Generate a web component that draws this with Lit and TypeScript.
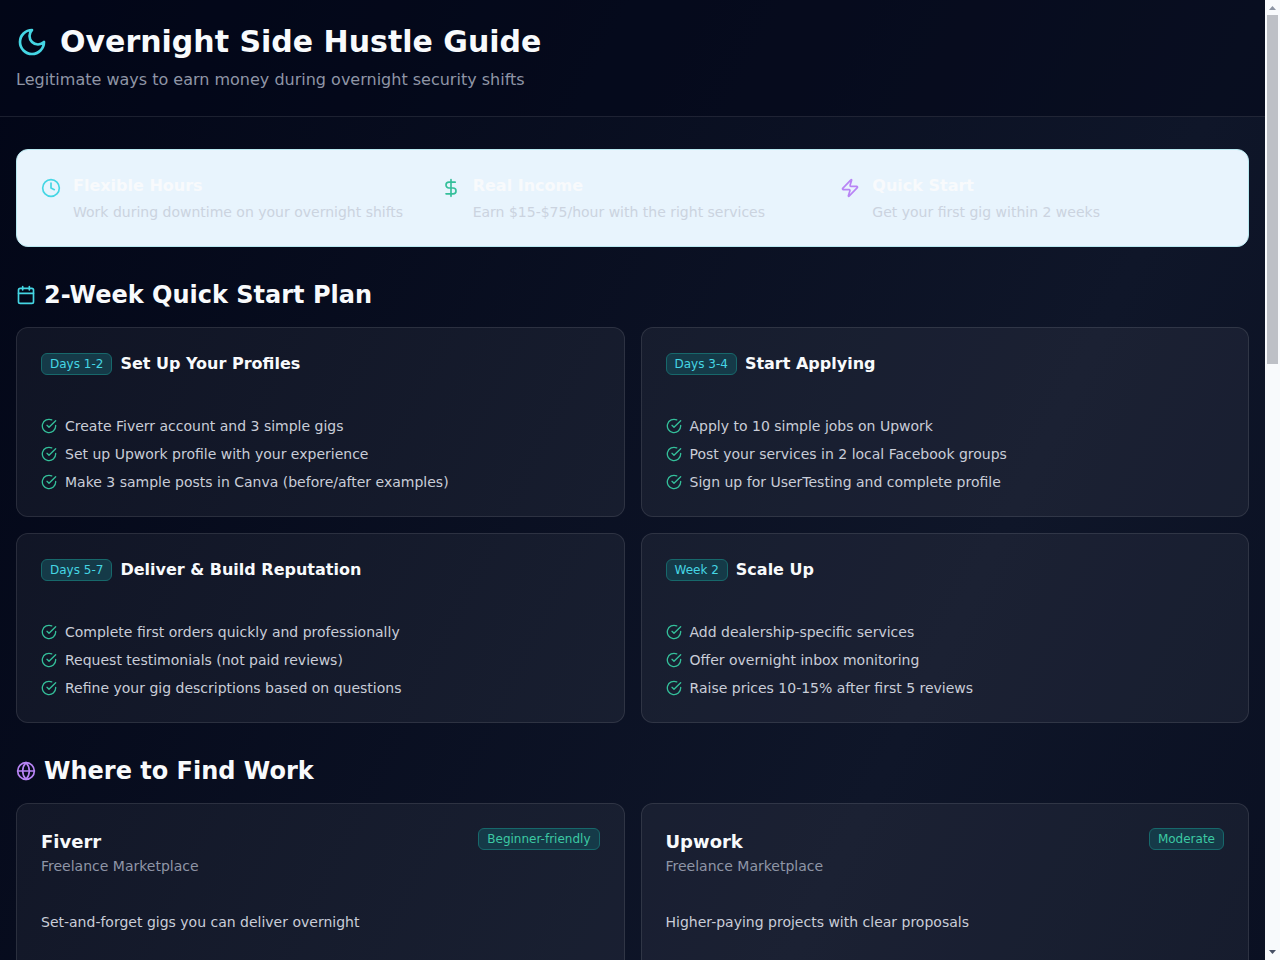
import { LitElement, html, css, svg } from "lit";
import { customElement, property } from "lit/decorators.js";

const icons: Record<string, unknown> = {
  moon: svg`<path d="M12 3a6 6 0 0 0 9 9 9 9 0 1 1-9-9Z"/>`,
  clock: svg`<circle cx="12" cy="12" r="10"/><polyline points="12 6 12 12 16 14"/>`,
  dollar: svg`<line x1="12" x2="12" y1="2" y2="22"/><path d="M17 5H9.5a3.5 3.5 0 0 0 0 7h5a3.5 3.5 0 0 1 0 7H6"/>`,
  zap: svg`<path d="M4 14a1 1 0 0 1-.78-1.63l9.9-10.2a.5.5 0 0 1 .86.46l-1.92 6.02A1 1 0 0 0 13 10h7a1 1 0 0 1 .78 1.63l-9.9 10.2a.5.5 0 0 1-.86-.46l1.92-6.02A1 1 0 0 0 11 14z"/>`,
  calendar: svg`<path d="M8 2v4"/><path d="M16 2v4"/><rect width="18" height="18" x="3" y="4" rx="2"/><path d="M3 10h18"/>`,
  globe: svg`<circle cx="12" cy="12" r="10"/><path d="M12 2a14.5 14.5 0 0 0 0 20 14.5 14.5 0 0 0 0-20"/><path d="M2 12h20"/>`,
  check: svg`<path d="M22 11.08V12a10 10 0 1 1-5.93-9.14"/><path d="m9 11 3 3L22 4"/>`,
};

@customElement("line-icon")
export class LineIcon extends LitElement {
  @property() name = "";

  static styles = css`
    :host { display: block; flex: none; width: 20px; height: 20px; }
    .glyph { display: block; width: 100%; height: 100%; fill: none; stroke: currentColor; stroke-width: 2; stroke-linecap: round; stroke-linejoin: round; }
  `;

  render() {
    return html`<svg class="glyph" viewBox="0 0 24 24" aria-hidden="true">${icons[this.name]}</svg>`;
  }
}

const benefits = [
  { icon: "clock", tone: "cyan", title: "Flexible Hours", text: "Work during downtime on your overnight shifts" },
  { icon: "dollar", tone: "green", title: "Real Income", text: "Earn $15-$75/hour with the right services" },
  { icon: "zap", tone: "purple", title: "Quick Start", text: "Get your first gig within 2 weeks" },
];

const plan = [
  { when: "Days 1-2", title: "Set Up Your Profiles", steps: ["Create Fiverr account and 3 simple gigs", "Set up Upwork profile with your experience", "Make 3 sample posts in Canva (before/after examples)"] },
  { when: "Days 3-4", title: "Start Applying", steps: ["Apply to 10 simple jobs on Upwork", "Post your services in 2 local Facebook groups", "Sign up for UserTesting and complete profile"] },
  { when: "Days 5-7", title: "Deliver & Build Reputation", steps: ["Complete first orders quickly and professionally", "Request testimonials (not paid reviews)", "Refine your gig descriptions based on questions"] },
  { when: "Week 2", title: "Scale Up", steps: ["Add dealership-specific services", "Offer overnight inbox monitoring", "Raise prices 10-15% after first 5 reviews"] },
];

const platforms = [
  { name: "Fiverr", kind: "Freelance Marketplace", level: "Beginner-friendly", text: "Set-and-forget gigs you can deliver overnight" },
  { name: "Upwork", kind: "Freelance Marketplace", level: "Moderate", text: "Higher-paying projects with clear proposals" },
];

@customElement("app-root")
export class AppRoot extends LitElement {
  static styles = css`
    :host {
      display: flex;
      height: 100vh;
      font-family: "DejaVu Sans", sans-serif;
      font-size: 16px;
      line-height: 24px;
      color: #f8fafc;
    }
    h1, h2, h3, p, ul { margin: 0; padding: 0; }
    .page { flex: 1; min-width: 0; overflow-y: auto; scrollbar-width: none; background: #020617; }
    .canvas { background: linear-gradient(to bottom right, #020617, #0f1629, #020617) 0 0 / 100% 2556px no-repeat; }
    .top { padding: 24px 16px; border-bottom: 1px solid rgba(255, 255, 255, 0.1); background: rgba(2, 6, 23, 0.5); }
    .brand { display: flex; align-items: center; gap: 12px; margin-bottom: 8px; }
    .brand-icon { width: 32px; height: 32px; }
    .brand-name { font-size: 30px; line-height: 36px; font-weight: 700; }
    .tagline { color: #8f95a6; }
    .content { display: grid; gap: 32px; padding: 32px 16px; }
    .cyan { color: #45d6e4; }
    .green { color: #34bf9a; }
    .purple { color: #b884f5; }

    .summary { display: grid; grid-template-columns: repeat(3, minmax(0, 1fr)); gap: 16px; padding: 24px; border: 1px solid #b9e8f0; border-radius: 12px; background: #e8f4fd; }
    .benefit { display: flex; gap: 12px; }
    .benefit-icon { margin-top: 4px; }
    .benefit-title { font-size: 16px; line-height: 24px; font-weight: 700; }
    .benefit-text { margin-top: 4px; font-size: 14px; line-height: 20px; color: #cbd3df; }

    .section-title { display: flex; align-items: center; gap: 8px; margin-bottom: 16px; font-size: 24px; line-height: 32px; font-weight: 700; }
    .cards { display: grid; grid-template-columns: repeat(2, minmax(0, 1fr)); gap: 16px; }
    .card { padding: 24px; border: 1px solid rgba(255, 255, 255, 0.1); border-radius: 12px; background: rgba(255, 255, 255, 0.05); }
    .card-head { display: flex; align-items: center; gap: 8px; margin-bottom: 40px; }
    .card-title { font-size: 16px; line-height: 24px; font-weight: 700; }
    .badge { flex: none; padding: 2px 8px; border: 1px solid #17686b; border-radius: 6px; background: #153a48; font-size: 12px; line-height: 16px; color: #45d6e4; }
    .badge.level { color: #3cc9a3; }
    .steps { display: grid; gap: 8px; list-style: none; font-size: 14px; line-height: 20px; color: #c9cdd8; }
    .step { display: flex; align-items: center; gap: 8px; }
    .step-icon { width: 16px; height: 16px; color: #34bf9a; }

    .platform { padding-bottom: 48px; }
    .platform-head { display: flex; align-items: flex-start; justify-content: space-between; gap: 16px; margin-bottom: 36px; }
    .platform-name { font-size: 18px; line-height: 28px; font-weight: 700; }
    .platform-kind { font-size: 14px; line-height: 20px; color: #8f95a6; }
    .platform-text { font-size: 14px; line-height: 20px; color: #c9cdd8; }

    .scrollbar { flex: none; display: flex; flex-direction: column; align-items: center; width: 15px; background: #f8fafc; }
    .arrow { display: block; width: 15px; height: 15px; fill: #8c94a3; }
    .arrow.down { fill: #475065; }
    .track { flex: 1; display: flex; width: 11px; }
    .thumb { flex: 1; height: 37.5%; background: #bdc0c6; }
  `;

  render() {
    return html`
      <div class="page">
        <div class="canvas">
          <header class="top">
            <div class="brand">
              <line-icon class="brand-icon cyan" name="moon"></line-icon>
              <h1 class="brand-name">Overnight Side Hustle Guide</h1>
            </div>
            <p class="tagline">Legitimate ways to earn money during overnight security shifts</p>
          </header>
          <main class="content">
            <section class="summary">
              ${benefits.map((b) => html`
                <div class="benefit">
                  <line-icon class="benefit-icon ${b.tone}" name=${b.icon}></line-icon>
                  <div>
                    <h3 class="benefit-title">${b.title}</h3>
                    <p class="benefit-text">${b.text}</p>
                  </div>
                </div>`)}
            </section>
            <section>
              <h2 class="section-title"><line-icon class="cyan" name="calendar"></line-icon>2-Week Quick Start Plan</h2>
              <div class="cards">
                ${plan.map((p) => html`
                  <article class="card">
                    <div class="card-head">
                      <span class="badge">${p.when}</span>
                      <h3 class="card-title">${p.title}</h3>
                    </div>
                    <ul class="steps">
                      ${p.steps.map((s) => html`<li class="step"><line-icon class="step-icon" name="check"></line-icon><span>${s}</span></li>`)}
                    </ul>
                  </article>`)}
              </div>
            </section>
            <section>
              <h2 class="section-title"><line-icon class="purple" name="globe"></line-icon>Where to Find Work</h2>
              <div class="cards">
                ${platforms.map((p) => html`
                  <article class="card platform">
                    <div class="platform-head">
                      <div>
                        <h3 class="platform-name">${p.name}</h3>
                        <p class="platform-kind">${p.kind}</p>
                      </div>
                      <span class="badge level">${p.level}</span>
                    </div>
                    <p class="platform-text">${p.text}</p>
                  </article>`)}
              </div>
            </section>
          </main>
        </div>
      </div>
      <div class="scrollbar" aria-hidden="true">
        <svg class="arrow" viewBox="0 0 15 15"><path d="M4 10 7.5 6 11 10Z"/></svg>
        <div class="track"><div class="thumb"></div></div>
        <svg class="arrow down" viewBox="0 0 15 15"><path d="M4 5 7.5 9 11 5Z"/></svg>
      </div>
    `;
  }
}
